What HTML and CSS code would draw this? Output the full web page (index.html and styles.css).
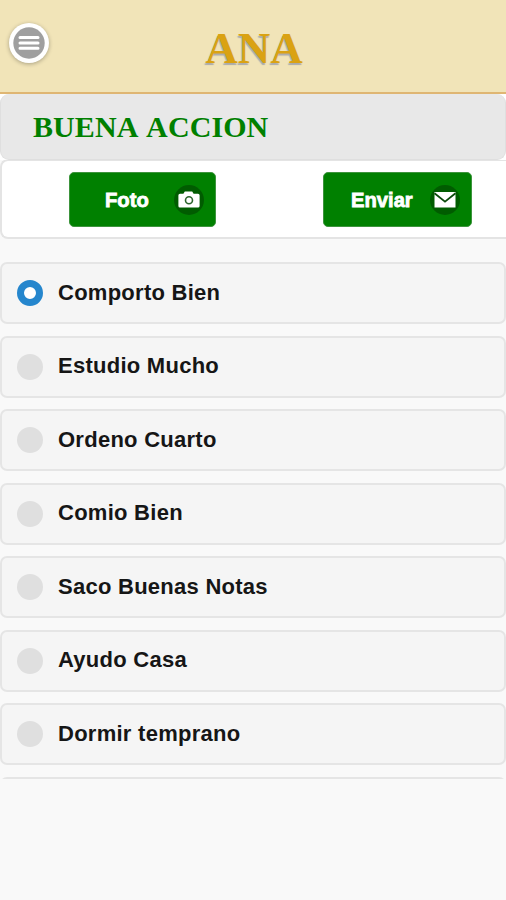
FILE: index.html
```html
<!DOCTYPE html>
<html lang="es">
<head>
<meta charset="utf-8">
<title>ANA</title>
<link rel="stylesheet" href="styles.css">
</head>
<body>
<header class="header">
  <button class="menu" aria-label="Menu">
    <svg width="32" height="32" viewBox="0 0 32 32"><circle cx="16" cy="16" r="15.7" fill="#9f9f9f"/><path d="M7 10.500h18M7 15.900h18M7 21.300h18" stroke="#fff" stroke-width="3" stroke-linecap="round"/></svg>
  </button>
  <h1 class="name">ANA</h1>
</header>
<h2 class="title">BUENA ACCION</h2>
<div class="actions">
  <button class="btn foto"><span class="label">Foto</span>
    <svg class="icon" width="30" height="30" viewBox="0 0 30 30"><circle cx="15" cy="15" r="15" fill="#005c00"/><path d="M6 8.700h3.400l1.400-2.200h7.400l1.400 2.200H24q1.600 0 1.600 1.600v10.600q0 1.600-1.600 1.600H6q-1.600 0-1.600-1.600V10.300q0-1.600 1.600-1.600z" fill="#fff"/><circle cx="15" cy="15.200" r="3.500" fill="#fff" stroke="#2c652c" stroke-width="1.600"/></svg>
  </button>
  <button class="btn enviar"><span class="label">Enviar</span>
    <svg class="icon" width="30" height="30" viewBox="0 0 30 30"><circle cx="15" cy="15" r="15" fill="#005c00"/><path d="M4.500 7h21v15.500h-21z" fill="#fff"/><path d="M4.500 8.300L15 16.600L25.500 8.300" fill="none" stroke="#0b4a0b" stroke-width="1.800"/></svg>
  </button>
</div>
<ul class="list">
  <li class="item"><span class="radio on"></span>Comporto Bien</li>
  <li class="item"><span class="radio"></span>Estudio Mucho</li>
  <li class="item"><span class="radio"></span>Ordeno Cuarto</li>
  <li class="item"><span class="radio"></span>Comio Bien</li>
  <li class="item"><span class="radio"></span>Saco Buenas Notas</li>
  <li class="item"><span class="radio"></span>Ayudo Casa</li>
  <li class="item"><span class="radio"></span>Dormir temprano</li>
  <li class="item"></li>
</ul>
</body>
</html>
```
FILE: styles.css
```css
* { box-sizing: border-box; }
body {
  margin: 0;
  height: 900px;
  overflow: hidden;
  background: #f9f9f9;
  font-family: "Liberation Sans", Arial, sans-serif;
}
.header {
  display: grid;
  grid-template-columns: 50px 1fr 50px;
  height: 94px;
  background: #f1e4b8;
  border-bottom: 2px solid #dfb673;
}
.menu {
  width: 40px;
  height: 40px;
  margin: 23px 0 0 9px;
  padding: 4px;
  border: 0;
  border-radius: 50%;
  background: #fff;
  box-shadow: 0 1px 4px rgba(0, 0, 0, .3);
}
.menu svg { display: block; }
.name {
  margin: 22px 0 0 2px;
  text-align: center;
  font: bold 45px/52px "Liberation Serif", "Times New Roman", serif;
  color: #daa213;
  text-shadow: -1px 2px 1px #aaa;
}
.title {
  height: 66px;
  margin: 0;
  padding-left: 32px;
  border: 1px solid #dfdfdf;
  border-top: 0;
  border-radius: 9px;
  background: #e8e8e8;
  box-shadow: 0 0 0 6px #fff;
  clip-path: inset(0);
  font: bold 30px/65px "Liberation Serif", "Times New Roman", serif;
  font-kerning: none;
  letter-spacing: .1px;
  color: #008000;
}
.actions {
  display: flex;
  gap: 107px;
  height: 80px;
  margin-top: -1px;
  padding: 12px 0 0 67px;
  border: 2px solid #e4e4e4;
  border-right: 0;
  border-radius: 8px 0 0 8px;
  background: #fff;
}
.btn {
  display: flex;
  align-items: center;
  justify-content: space-between;
  height: 55px;
  margin-top: -1px;
  padding: 0 11px 0 35px;
  border: 1px solid #3d943d;
  border-radius: 5px;
  background: #008000;
  color: #fff;
  font: bold 20.2px/55px "Liberation Sans", Arial, sans-serif;
}
.foto { width: 147px; }
.enviar { width: 149px; padding-left: 27px; }
.label { padding-top: 2px; -webkit-text-stroke: .8px #fff; }
.list {
  display: flex;
  flex-direction: column;
  gap: 11.5px;
  height: 517px;
  margin: 23px 0 0;
  padding: 0;
  overflow: hidden;
  list-style: none;
}
.item {
  display: flex;
  flex: none;
  align-items: center;
  gap: 15px;
  height: 62px;
  padding-left: 15px;
  padding-bottom: 1px;
  border: 2px solid #e5e5e5;
  border-radius: 7px;
  background: #f5f5f5;
  color: #161616;
  font-size: 22px;
  font-weight: bold;
  letter-spacing: .26px;
}
.radio {
  width: 26px;
  height: 26px;
  margin-top: 1px;
  border-radius: 50%;
  background: #dfdfdf;
}
.on { border: 7px solid #2586cd; background: #fff; }
```
